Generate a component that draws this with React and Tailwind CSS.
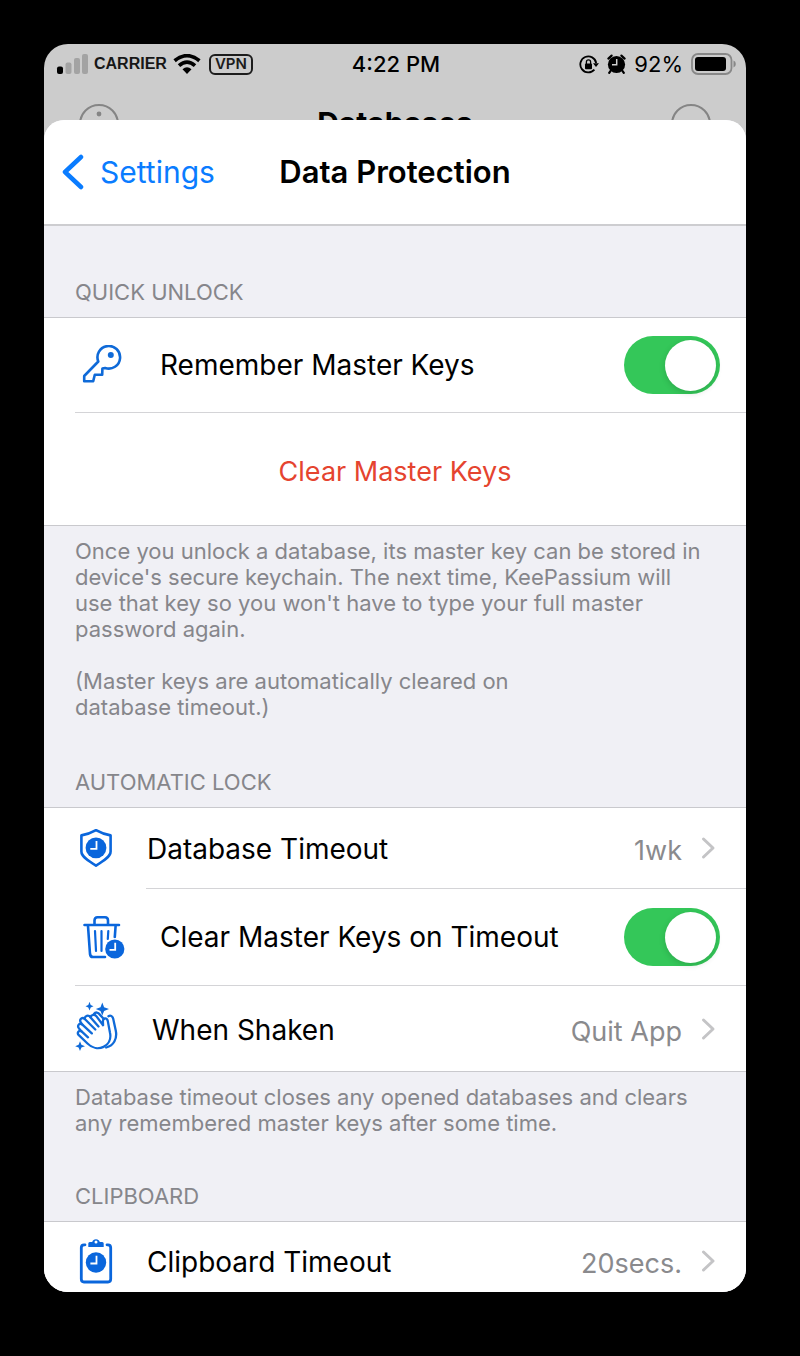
import { useState } from "react";

function ClockFace({ cx, cy, r }) {
  return (
    <>
      <circle cx={cx} cy={cy} r={r} fill="#0a66dc" />
      <path
        d={`M${cx + 0.5} ${cy - r * 0.65}V${cy + 1}H${cx - r * 0.55}`}
        fill="none"
        stroke="#fff"
        strokeWidth="1.8"
      />
    </>
  );
}

function KeyIcon() {
  return (
    <svg width="40" height="40" viewBox="0 0 40 40" fill="none" stroke="#0f6ad8" strokeWidth="2.6" strokeLinejoin="round" aria-hidden="true">
      <path d="M16.3 16.5A11.3 11.3 0 1 1 23.2 23L20.4 23.6L20.2 29.8H12.8L11.2 36.3H2.2V31Z" />
      <circle cx="28.8" cy="10" r="3" fill="#0f6ad8" stroke="none" />
    </svg>
  );
}

function ShieldIcon() {
  return (
    <svg width="34" height="40" viewBox="0 0 34 40" fill="none" aria-hidden="true">
      <path d="M17 2.2C21.5 4.8 26.5 6.6 31.6 7.4V23.5C31.6 28.5 25 32.8 17 37.6C9 32.8 2.4 28.5 2.4 23.5V7.4C7.5 6.6 12.5 4.8 17 2.2Z" stroke="#0a66dc" strokeWidth="2.6" strokeLinejoin="round" />
      <ClockFace cx={17} cy={19.8} r={10.4} />
    </svg>
  );
}

function TrashIcon() {
  return (
    <svg width="46" height="44" viewBox="-4 0 46 44" fill="none" stroke="#0a66dc" strokeWidth="2.6" strokeLinecap="round" strokeLinejoin="round" aria-hidden="true">
      <path d="M1.5 10H36M11.5 9V5.5Q11.5 2.3 14.5 2.3H22Q25 2.3 25 5.5V9M5 11L7 39Q7.3 42 10 42H22M32.6 11L31.8 22" />
      <path d="M12 16L13 36M18.5 16V36M25.3 16L24.8 24" strokeWidth="2.2" />
      <circle cx="31.8" cy="34" r="10.6" fill="#fff" stroke="none" />
      <circle cx="31.8" cy="34" r="9.6" fill="#0a66dc" stroke="none" />
      <path d="M32.2 27.8V34.9H26.5" stroke="#fff" strokeWidth="1.8" strokeLinecap="butt" strokeLinejoin="miter" />
    </svg>
  );
}

function ClapIcon() {
  return (
    <svg width="43" height="56" viewBox="0 0 43 56" fill="none" stroke="#0f6ad8" strokeWidth="2.3" strokeLinecap="round" strokeLinejoin="round" aria-hidden="true">
      <path d="M12.5 42.5L3.8 34.2C1.5 31.7 4 28.8 6.6 30.4L4 27.4C1.7 24.4 4.7 21.4 7.4 23.6L5.8 21.5C3.8 18.4 7.4 15.6 9.8 18C9.5 14.4 13.6 13.6 15.4 16.2C16.4 13.2 19.7 13 21.5 15.4L28.1 24.2L27.9 20.5C28 16.5 32 16.4 32.8 20.1L35 31.8C37.8 45 22.5 52.5 12.5 42.5Z" />
      <path d="M6.6 30.4L13 36.3M7.4 23.6L16.8 32.4M9.8 18L20.3 28.5M15.4 16.2L23.5 25.5" />
      <path d="M19 13C20.5 10.7 23.4 11.3 24.6 13.4L28.8 18M33.4 15.2C35.4 14 37.6 14.8 38.2 17.8L40.8 29.8C42.4 38 38.6 44.7 31.2 46.5" />
      <path
        d="M14.5.8L15.7 4L18.5 5.2L15.7 6.4L14.5 9.6L13.3 6.4L10.5 5.2L13.3 4ZM27.3 1.6L29.1 6.3L34 8.1L29.1 9.9L27.3 14.6L25.5 9.9L20.8 8.1L25.5 6.3ZM5 40.3L6.4 43.8L10 45.2L6.4 46.6L5 50L3.6 46.6L.2 45.2L3.6 43.8Z"
        fill="#0f6ad8"
        stroke="none"
      />
    </svg>
  );
}

function ClipboardIcon() {
  return (
    <svg width="34" height="46" viewBox="0 0 34 46" fill="none" aria-hidden="true">
      <path d="M6 6.8H5Q2.3 6.8 2.3 9.8V41Q2.3 44 5 44H29Q31.7 44 31.7 41V9.8Q31.7 6.8 29 6.8H28" stroke="#0a66dc" strokeWidth="2.8" strokeLinecap="round" />
      <path fillRule="evenodd" d="M10.8 4H13.2A4 4 0 0 1 20.8 4H23.2Q24.7 4 24.7 5.5V9H9.3V5.5Q9.3 4 10.8 4ZM17 2.6A1.5 1.5 0 1 0 17 5.6A1.5 1.5 0 1 0 17 2.6Z" fill="#0a66dc" />
      <ClockFace cx={17} cy={24.5} r={10.2} />
    </svg>
  );
}

function Chevron() {
  return (
    <svg width="16" height="24" viewBox="0 0 16 24" fill="none" stroke="#c4c4c6" strokeWidth="3" strokeLinecap="round" strokeLinejoin="round" aria-hidden="true">
      <path d="M3.5 3L13 12L3.5 21" />
    </svg>
  );
}

function StatusBar() {
  return (
    <div className="flex h-10 items-center pr-2.5 pl-3 text-black">
      <div className="flex flex-1 items-center">
        <svg width="32" height="20" viewBox="0 0 32 20" aria-hidden="true">
          <rect x="1" y="12.5" width="6" height="7.5" rx="2" />
          <g fill="#a3a3a3">
            <rect x="9.5" y="8.5" width="6" height="11.5" rx="2" />
            <rect x="18" y="4" width="6" height="16" rx="2" />
            <rect x="26" y="0" width="6" height="20" rx="2" />
          </g>
        </svg>
        <span className="ml-1.5 font-['Liberation_Sans',sans-serif] text-base leading-6 font-bold text-[#171717]">CARRIER</span>
        <svg className="ml-1.5" width="28" height="20" viewBox="0 0 28 20" fill="none" stroke="#000" strokeWidth="3.7" aria-hidden="true">
          <path d="M1.6 6.8Q14-3.4 26.4 6.8M6 11.6Q14 4.6 22 11.6" />
          <path d="M14 20L9.5 15.3Q14 11 18.5 15.3Z" fill="#000" stroke="none" />
        </svg>
        <span className="ml-2 flex h-[21px] items-center rounded-md border-2 border-[#1c1c1c] px-1 text-[15px] font-semibold text-[#1c1c1c]">VPN</span>
      </div>
      <span className="text-[22px] leading-6 font-medium">4:22 PM</span>
      <div className="flex flex-1 items-center justify-end">
        <svg width="20" height="19" viewBox="0 0 20 19" fill="none" stroke="#000" strokeWidth="1.8" aria-hidden="true">
          <path d="M15.4 14.6A8 8 0 1 1 17.2 8" />
          <path d="M14 8.2H20L17 12Z" fill="#000" stroke="none" />
          <rect x="6" y="8.5" width="7" height="5.8" rx="1" fill="#000" stroke="none" />
          <path d="M7.4 9V7A2.1 2.1 0 0 1 11.6 7V9" strokeWidth="1.3" />
        </svg>
        <svg className="ml-2" width="19" height="20" viewBox="0 0 19 20" aria-hidden="true">
          <circle cx="9.5" cy="10.5" r="8.6" />
          <path d="M1.4 4.6L4.6 1.6M17.6 4.6L14.4 1.6M3.6 16.8L2.2 18.8M15.4 16.8L16.8 18.8" stroke="#000" strokeWidth="2.2" strokeLinecap="round" />
          <path d="M9.7 5V10.8H5" fill="none" stroke="#d0d0d0" strokeWidth="1.5" />
        </svg>
        <span className="ml-2 text-[22px] leading-6">92%</span>
        <svg className="ml-2" width="45" height="22" viewBox="0 0 45 22" aria-hidden="true">
          <rect x="1" y="1" width="39.5" height="20" rx="6" fill="none" stroke="#888" strokeWidth="1.8" />
          <rect x="4" y="4" width="31" height="14" rx="3" />
          <path d="M42.5 7.5Q44.8 8.2 44.8 11Q44.8 13.8 42.5 14.5Z" fill="#888" />
        </svg>
      </div>
    </div>
  );
}

function Toggle({ id, defaultChecked }) {
  const [on, setOn] = useState(defaultChecked);
  return (
    <input
      id={id}
      type="checkbox"
      role="switch"
      checked={on}
      onChange={(e) => setOn(e.target.checked)}
      className="flex h-[58px] w-24 shrink-0 cursor-pointer appearance-none items-center rounded-full bg-[#d9d9dc] px-1 before:size-[51px] before:rounded-full before:bg-white before:shadow-[0_2px_6px_rgba(0,0,0,0.15)] checked:justify-end checked:bg-[#34c759]"
    />
  );
}

function ToggleRow({ id, icon, label, className }) {
  return (
    <div className={`flex items-center pr-[26px] ${className}`}>
      <span className="flex w-[53px] shrink-0 justify-center">{icon}</span>
      <label htmlFor={id} className="ml-8 flex-1 text-[28px] leading-9">{label}</label>
      <Toggle id={id} defaultChecked />
    </div>
  );
}

function LinkRow({ icon, label, value, className }) {
  return (
    <button type="button" className={`flex w-full items-center pr-[30px] text-left ${className}`}>
      <span className="flex min-w-[42px] shrink-0 justify-center">{icon}</span>
      <span className="ml-[30px] flex-1 pt-0.5 text-[28px] leading-9">{label}</span>
      <span className="mr-[18px] pt-1.5 text-[27px] leading-9 text-[#8a8a8d]">{value}</span>
      <Chevron />
    </button>
  );
}

function Heading({ children, className }) {
  return (
    <h2 className={`px-[31px] pb-3 text-[22px] leading-[26px] text-[#86868b] ${className}`}>{children}</h2>
  );
}

const note = "px-[31px] pt-3 text-[22px] leading-[26px] text-[#86868b]";

export default function App() {
  return (
    <div className="min-h-screen bg-black pt-11 pr-[54px] pb-16 pl-11 font-[Inter,sans-serif] text-black">
      <div className="overflow-hidden rounded-3xl bg-[#cccccc]">
        <StatusBar />
        <div className="flex h-9 justify-between overflow-hidden px-[34px] pt-[19px]" aria-hidden="true">
          <svg className="shrink-0" width="42" height="42" viewBox="0 0 42 42" fill="none" stroke="#858585" strokeWidth="2">
            <circle cx="21" cy="21" r="19" />
            <circle cx="21" cy="11" r="2.4" fill="#858585" stroke="none" />
          </svg>
          <span className="text-[30px] leading-10 font-bold">Databases</span>
          <svg className="shrink-0" width="42" height="42" viewBox="0 0 42 42" fill="none" stroke="#858585" strokeWidth="2">
            <circle cx="21" cy="21" r="19" />
          </svg>
        </div>
        <main className="overflow-hidden rounded-t-[20px] bg-[#f0f0f5]">
          <header className="grid h-[106px] grid-cols-[1fr_auto_1fr] items-center border-b-2 border-[#cdcdd0] bg-white px-[18px]">
            <button type="button" className="flex items-center gap-4 justify-self-start text-[30px] leading-9 text-[#0a7cff]">
              <svg width="22" height="36" viewBox="0 0 22 36" fill="none" stroke="#0a7cff" strokeWidth="4.5" strokeLinecap="round" strokeLinejoin="round" aria-hidden="true">
                <path d="M19 3L3 18L19 33" />
              </svg>
              Settings
            </button>
            <h1 className="text-[31px] leading-9 font-semibold">Data Protection</h1>
            <span />
          </header>

          <section>
            <Heading className="pt-[53px]">QUICK UNLOCK</Heading>
            <div className="border-y border-[#c9c9cd] bg-white pl-[31px]">
              <ToggleRow id="remember-keys" icon={<KeyIcon />} label="Remember Master Keys" className="h-[94px]" />
              <button type="button" className="flex h-[113px] w-full items-center justify-center border-t border-[#d4d4d7] pt-1.5 pr-[31px] text-[27px] leading-9 text-[#e5442f]">
                Clear Master Keys
              </button>
            </div>
            <p className={note}>
              Once you unlock a database, its master key can be stored in<br />
              device's secure keychain. The next time, KeePassium will<br />
              use that key so you won't have to type your full master<br />
              password again.
              <br />
              <br />
              (Master keys are automatically cleared on<br />
              database timeout.)
            </p>
          </section>

          <section>
            <Heading className="pt-[49px]">AUTOMATIC LOCK</Heading>
            <div className="border-y border-[#c9c9cd] bg-white pl-[31px]">
              <LinkRow icon={<ShieldIcon />} label="Database Timeout" value="1wk" className="h-20" />
              <div className="ml-[71px] border-t border-[#d4d4d7]" />
              <ToggleRow id="clear-on-timeout" icon={<TrashIcon />} label="Clear Master Keys on Timeout" className="h-24" />
              <LinkRow icon={<span className="mr-1"><ClapIcon /></span>} label="When Shaken" value="Quit App" className="h-[86px] border-t border-[#d4d4d7]" />
            </div>
            <p className={note}>
              Database timeout closes any opened databases and clears<br />
              any remembered master keys after some time.
            </p>
          </section>

          <section>
            <Heading className="pt-[47px]">CLIPBOARD</Heading>
            <div className="border-t border-[#c9c9cd] bg-white pl-[31px]">
              <LinkRow icon={<ClipboardIcon />} label="Clipboard Timeout" value="20secs." className="pt-4 pb-2" />
            </div>
          </section>
        </main>
      </div>
    </div>
  );
}
